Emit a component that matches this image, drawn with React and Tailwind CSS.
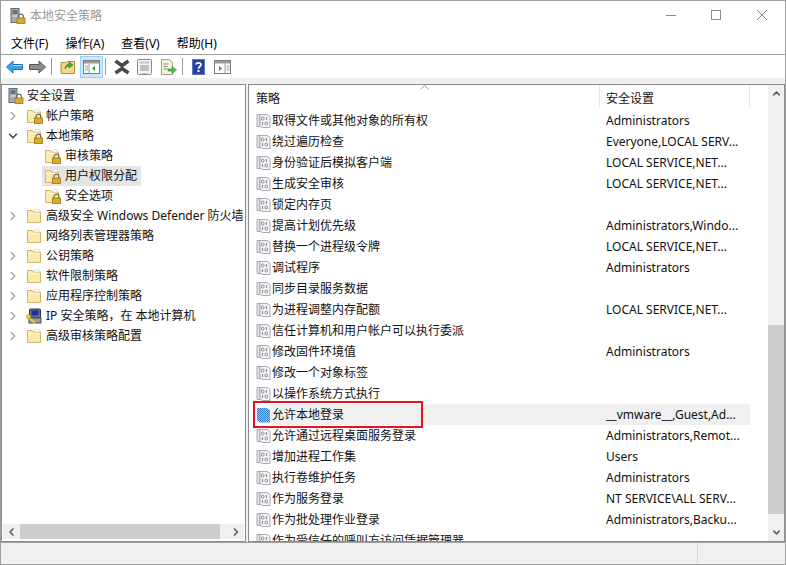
import { ChevronRight, ChevronDown } from "lucide-react";

const tree = [
  { label: "帐户策略", level: 1, arrow: "right", lock: true },
  { label: "本地策略", level: 1, arrow: "down", lock: true },
  { label: "审核策略", level: 2, lock: true },
  { label: "用户权限分配", level: 2, lock: true, selected: true },
  { label: "安全选项", level: 2, lock: true },
  { label: "高级安全 Windows Defender 防火墙", level: 1, arrow: "right" },
  { label: "网络列表管理器策略", level: 1 },
  { label: "公钥策略", level: 1, arrow: "right" },
  { label: "软件限制策略", level: 1, arrow: "right" },
  { label: "应用程序控制策略", level: 1, arrow: "right" },
  { label: "IP 安全策略，在 本地计算机", level: 1, arrow: "right", ip: true },
  { label: "高级审核策略配置", level: 1, arrow: "right" }
];

const rows = [
  ["取得文件或其他对象的所有权", "Administrators"],
  ["绕过遍历检查", "Everyone,LOCAL SERV..."],
  ["身份验证后模拟客户端", "LOCAL SERVICE,NET..."],
  ["生成安全审核", "LOCAL SERVICE,NET..."],
  ["锁定内存页", ""],
  ["提高计划优先级", "Administrators,Windo..."],
  ["替换一个进程级令牌", "LOCAL SERVICE,NET..."],
  ["调试程序", "Administrators"],
  ["同步目录服务数据", ""],
  ["为进程调整内存配额", "LOCAL SERVICE,NET..."],
  ["信任计算机和用户帐户可以执行委派", ""],
  ["修改固件环境值", "Administrators"],
  ["修改一个对象标签", ""],
  ["以操作系统方式执行", ""],
  ["允许本地登录", "__vmware__,Guest,Ad...", true],
  ["允许通过远程桌面服务登录", "Administrators,Remot..."],
  ["增加进程工作集", "Users"],
  ["执行卷维护任务", "Administrators"],
  ["作为服务登录", "NT SERVICE\\ALL SERV..."],
  ["作为批处理作业登录", "Administrators,Backu..."],
  ["作为受信任的呼叫方访问凭据管理器", ""]
];

function Lock({ x = 7, y = 7 }) {
  return (
    <g transform={`translate(${x} ${y})`}>
      <path d="M2 4V2.600a2.400 2.400 0 0 1 4.800 0V4" fill="none" stroke="#6b6b5c" strokeWidth="1.200" />
      <rect x="0.500" y="4" width="8" height="5.500" fill="#dcab2c" stroke="#9a7412" strokeWidth="0.800" />
    </g>
  );
}

function Folder({ lock }) {
  return (
    <svg width="17" height="16" viewBox="0 0 17 16" className="shrink-0">
      <path d="M1.500 2.500h5l1 1.500h7v10.500h-13z" fill="#fbeab0" stroke="#d3b56b" />
      <path d="M2.500 5.500h11" stroke="#fff6d6" />
      <path d="M9 1.500h4.500V4H9z" fill="#fff" stroke="#cfd6dc" strokeWidth="0.600" />
      {lock && <Lock x={8} y={6} />}
    </svg>
  );
}

function ServerLock() {
  return (
    <svg width="16" height="16" viewBox="0 0 16 16" className="shrink-0">
      <rect x="1" y="0.500" width="8" height="14" fill="#a3abb3" stroke="#5f6b75" />
      <path d="M2.500 3h5M2.500 5h5" stroke="#2f3a44" />
      <path d="M2.500 8h5" stroke="#e6e9ec" />
      <Lock x={6.500} y={6} />
    </svg>
  );
}

function IpIcon() {
  return (
    <svg width="17" height="17" viewBox="0 0 17 17" className="shrink-0">
      <rect x="3.500" y="1" width="11" height="9" rx="1" fill="#6d7480" stroke="#2f3540" />
      <rect x="5.500" y="2.500" width="7" height="5" fill="#1b2fa8" />
      <rect x="3" y="10" width="12" height="5" fill="#9b9ea3" stroke="#4a4d52" />
      <path d="M1 8l8 7" stroke="#e8d020" strokeWidth="2" />
      <circle cx="2.500" cy="8.500" r="2" fill="#f3e23c" stroke="#8f8412" strokeWidth="0.600" />
    </svg>
  );
}

function PolicyIcon({ active }) {
  if (active) {
    return (
      <svg width="15" height="16" viewBox="0 0 15 16" className="shrink-0">
        <defs>
          <pattern id="dither" width="2" height="2" patternUnits="userSpaceOnUse">
            <rect width="2" height="2" fill="#2f82dc" />
            <rect width="1" height="1" fill="#8fc2f0" />
            <rect x="1" y="1" width="1" height="1" fill="#8fc2f0" />
          </pattern>
        </defs>
        <path d="M1 1h10l3 2v12.500H4L1 13.500z" fill="url(#dither)" />
      </svg>
    );
  }
  return (
    <svg width="15" height="16" viewBox="0 0 15 16" className="shrink-0">
      <path d="M1 1.500h3v12H1z" fill="#e4e4ea" stroke="#a9a9b2" />
      <path d="M4 1.500h7l3 2v11H7l-3-1z" fill="#f7f7f9" stroke="#a9a9b2" />
      <rect x="5.500" y="4" width="2.500" height="3" rx="1" fill="none" stroke="#8b8b96" />
      <path d="M10.500 4v3" stroke="#8b8b96" strokeWidth="1.200" />
      <path d="M6.500 9v3" stroke="#8b8b96" strokeWidth="1.200" />
      <rect x="9" y="9" width="2.500" height="3" rx="1" fill="none" stroke="#8b8b96" />
    </svg>
  );
}

function Toolbar() {
  return (
    <div className="flex h-[23px] items-center bg-white pl-[5px]">
      <svg width="17" height="14" viewBox="0 0 17 14">
        <path d="M0.500 7L7 1v3.500h9.500v5H7V13z" fill="#3ba4ee" stroke="#1f6fb8" />
        <path d="M7 5.500h9" stroke="#a8dcfb" />
      </svg>
      <svg width="17" height="14" viewBox="0 0 17 14" className="ml-[6px]">
        <path d="M16.500 7L10 1v3.500H0.500v5H10V13z" fill="#8c8c8c" stroke="#555" />
      </svg>
      <div className="ml-[5px] h-[17px] w-px bg-[#9a9a9a]" />
      <svg width="16" height="16" viewBox="0 0 16 16" className="ml-[8px]">
        <path d="M1 3.500h5l1-1h7.500v12H1z" fill="#f5d98a" stroke="#b08f3a" />
        <path d="M5 10c0-3 2-5 4-5V3l4 3-4 3V7c-1.500 0-3 1-4 3z" fill="#4da838" stroke="#2c7a22" strokeWidth="0.600" />
      </svg>
      <div className="ml-[4px] flex h-[22px] w-[23px] items-center justify-center border border-[#99d1ff] bg-[#cce8ff]">
        <svg width="17" height="14" viewBox="0 0 17 14">
          <rect x="0.500" y="0.500" width="16" height="13" fill="#fff" stroke="#7d7d7d" />
          <rect x="1" y="1" width="15" height="2.500" fill="#9a9a9a" />
          <path d="M6 3.500v10" stroke="#9a9a9a" />
          <path d="M2 6h3M2 8h3M2 10h3" stroke="#9a9a9a" />
          <path d="M12 6v5L9 8.500z" fill="#2f9e44" />
        </svg>
      </div>
      <div className="ml-[2px] h-[17px] w-px bg-[#9a9a9a]" />
      <svg width="18" height="16" viewBox="0 0 18 16" className="ml-[7px]">
        <path d="M2.500 2L9 6.500 15.500 2M2.500 14L9 9.500 15.500 14" fill="none" stroke="#4a4a4a" strokeWidth="3.500" />
      </svg>
      <svg width="15" height="16" viewBox="0 0 15 16" className="ml-[6px]">
        <rect x="0.500" y="0.500" width="14" height="15" rx="1" fill="#f2f2f2" stroke="#8a8a8a" />
        <rect x="2.500" y="2.500" width="10" height="2" fill="#c9c9c9" />
        <path d="M3 7h9M3 9h9M3 11h9" stroke="#8f8f8f" />
        <path d="M5 15h5" stroke="#38a3dc" />
      </svg>
      <svg width="17" height="16" viewBox="0 0 17 16" className="ml-[8px]">
        <path d="M1.500 0.500h8l3 3v12h-11z" fill="#f8f3df" stroke="#9d9d8f" />
        <path d="M3.500 5h5M3.500 7.500h4M3.500 10h4" stroke="#8a8a7c" />
        <path d="M8 10h4V7.500l4.500 3.500-4.500 3.500V12H8z" fill="#4dbb4d" stroke="#2b8a2b" strokeWidth="0.600" />
      </svg>
      <div className="ml-[5px] h-[17px] w-px bg-[#9a9a9a]" />
      <svg width="13" height="16" viewBox="0 0 13 16" className="ml-[9px]">
        <rect width="13" height="16" fill="#27409c" />
        <rect x="0.500" y="0.500" width="12" height="15" fill="none" stroke="#5a74c8" />
        <path d="M4 5.500C4 3.500 9 3 9 5.500c0 2-2.500 2-2.500 4.200" fill="none" stroke="#fff" strokeWidth="1.800" />
        <rect x="5.500" y="11" width="2" height="2" fill="#fff" />
      </svg>
      <svg width="17" height="14" viewBox="0 0 17 14" className="ml-[9px]">
        <rect x="0.500" y="0.500" width="16" height="13" fill="#fff" stroke="#7d7d7d" />
        <rect x="1" y="1" width="15" height="2.500" fill="#9a9a9a" />
        <path d="M11 3.500v10" stroke="#9a9a9a" />
        <path d="M12.500 6h3M12.500 8h3M12.500 10h3" stroke="#9a9a9a" />
        <path d="M5 6v5l3-2.500z" fill="#2f9e44" />
      </svg>
    </div>
  );
}

function TreeRow({ item }) {
  return (
    <div className={`flex h-5 items-center whitespace-nowrap ${item.level === 2 ? "pl-[40px]" : "pl-[4px]"}`}>
      {item.level === 1 && (
        <span className="flex w-[19px] shrink-0 items-center">
          {item.arrow === "right" && <ChevronRight size={14} strokeWidth={2.5} className="text-[#a6a6a6]" />}
          {item.arrow === "down" && <ChevronDown size={14} strokeWidth={2.5} className="text-[#404040]" />}
        </span>
      )}
      <span className={`flex h-5 items-center ${item.level === 2 ? "gap-[4px] pl-[2px] pr-[4px]" : "gap-[3px] pl-[1px]"} ${item.selected ? "bg-[#e5e5e5]" : ""}`}>
        {item.ip ? <IpIcon /> : <Folder lock={item.lock} />}
        <span>{item.label}</span>
      </span>
    </div>
  );
}

export default function App() {
  return (
    <div className="flex h-[565px] w-[786px] flex-col overflow-hidden border border-[#a0a0a0] bg-[#f0f0f0] font-['Noto_Sans','Noto_Sans_CJK_SC',sans-serif] text-[12px] text-[#111111]">
      <div className="flex h-[29px] items-center justify-between bg-white pl-[9px]">
        <div className="flex items-center gap-[4px] text-[#9a9a9a]">
          <ServerLock />
          <span className="text-[12px]">本地安全策略</span>
        </div>
        <div className="flex items-center">
          <svg width="46" height="12" viewBox="0 0 46 12"><path d="M19 5.500h10" stroke="#8a8a8a" /></svg>
          <svg width="46" height="12" viewBox="0 0 46 12"><rect x="18.500" y="0.500" width="9" height="9" fill="none" stroke="#8a8a8a" /></svg>
          <svg width="46" height="12" viewBox="0 0 46 12"><path d="M18 0l10 10M28 0L18 10" stroke="#8a8a8a" /></svg>
        </div>
      </div>
      <div className="flex h-[25px] items-center gap-[17px] border-b border-[#a0a0a0] bg-white pl-[10px] pt-[3px] text-black">
        <span>文件(F)</span>
        <span>操作(A)</span>
        <span>查看(V)</span>
        <span>帮助(H)</span>
      </div>
      <Toolbar />
      <div className="flex min-h-0 flex-1 gap-[2px] border-t-[6px] border-[#f0f0f0]">
        <div className="relative flex w-[245px] shrink-0 flex-col overflow-hidden border border-[#8c8c8c] bg-white">
          <div className="flex-1 overflow-hidden pt-[1px]">
            <div className="flex h-5 items-center gap-[3px] pl-[6px]">
              <ServerLock />
              <span>安全设置</span>
            </div>
            {tree.map((item) => (
              <TreeRow key={item.label} item={item} />
            ))}
          </div>
          <div className="mx-[1px] mb-[2px] flex h-[15px] items-center bg-[#f0f0f0]">
            <ChevronRight size={12} strokeWidth={3.5} className="w-[17px] rotate-180 text-[#606060]" />
            <div className="h-full flex-1 bg-[#cdcdcd]" />
            <ChevronRight size={12} strokeWidth={3.5} className="ml-[10px] mr-[2px] text-[#606060]" />
          </div>
        </div>
        <div className="relative flex min-w-0 flex-1 overflow-hidden border border-[#8c8c8c] bg-white">
          <div className="flex min-w-0 flex-1 flex-col">
            <div className="relative flex h-[25px] shrink-0">
              <div className="flex h-[22px] w-[351px] items-center border-r border-[#e5e5e5] pl-[7px] pt-[5px]">策略</div>
              <div className="flex h-[22px] w-[150px] items-center border-r border-[#e5e5e5] pl-[6px] pt-[5px]">安全设置</div>
              <svg width="9" height="5" viewBox="0 0 9 5" className="absolute left-[171px] top-0">
                <path d="M0.500 4.500L4.500 0.500l4 4" fill="none" stroke="#9a9a9a" />
              </svg>
            </div>
            <div className="min-h-0 flex-1 overflow-hidden">
              {rows.map(([name, value, active]) => (
                <div key={name} className="flex h-[21px] items-center whitespace-nowrap">
                  <span className="ml-[7px] flex w-[15px] shrink-0 items-center"><PolicyIcon active={active} /></span>
                  <div className={`flex h-[21px] w-[479px] shrink-0 items-center ${active ? "bg-[#f0f0f0]" : ""}`}>
                    <span className="w-[329px] pl-[1px]">{name}</span>
                    <span className="pl-[6px]">{value}</span>
                  </div>
                </div>
              ))}
            </div>
          </div>
          <div className="flex w-[16px] shrink-0 flex-col bg-[#f0f0f0]">
            <div className="flex h-[16px] items-center justify-center">
              <ChevronRight size={11} strokeWidth={3.5} className="-rotate-90 text-[#606060]" />
            </div>
            <div className="h-[224px]" />
            <div className="h-[189px] bg-[#cdcdcd]" />
            <div className="flex flex-1 items-end justify-center pb-[3px]">
              <ChevronRight size={11} strokeWidth={3.5} className="rotate-90 text-[#606060]" />
            </div>
          </div>
          <div className="absolute left-[4px] top-[316px] h-[27px] w-[170px] border-2 border-[#e81123]" />
        </div>
      </div>
      <div className="flex h-[22px] shrink-0 border-t border-[#a0a0a0]">
        <div className="w-[697px] border-r border-[#d9d9d9]" />
      </div>
    </div>
  );
}
